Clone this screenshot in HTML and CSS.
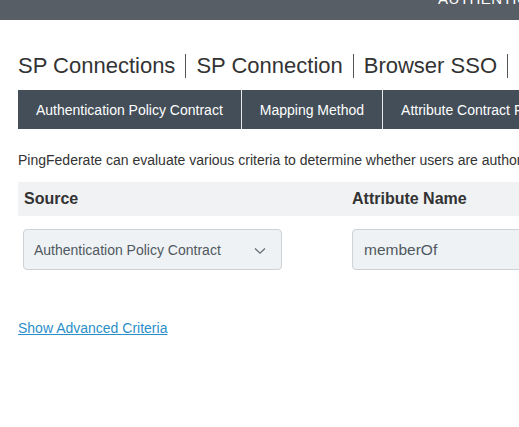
FILE: index.html
```html
<!DOCTYPE html>
<html>
<head>
<meta charset="utf-8">
<link rel="stylesheet" href="styles.css">
</head>
<body>
<div class="topbar"><span class="topbar-text">AUTHENTICATION</span></div>
<main class="content">
  <h1 class="crumbs">
    <span class="crumb">SP Connections</span>
    <span class="crumb">SP Connection</span>
    <span class="crumb">Browser SSO</span>
    <span class="crumb">Policy</span>
  </h1>
  <nav class="tabs">
    <div class="tab">Authentication Policy Contract</div>
    <div class="tab">Mapping Method</div>
    <div class="tab">Attribute Contract Fulfillment</div>
  </nav>
  <p class="intro">PingFederate can evaluate various criteria to determine whether users are authorized to access SP resources.</p>
  <div class="table">
    <div class="row head">
      <div class="cell">Source</div>
      <div class="cell">Attribute Name</div>
    </div>
    <div class="row">
      <div class="cell">
        <div class="select">
          <span>Authentication Policy Contract</span>
          <svg class="chev" width="12" height="8" viewBox="0 0 12 8"><path d="M1 1.5 L6 6.2 L11 1.5" fill="none" stroke="#666c72" stroke-width="1.3"/></svg>
        </div>
      </div>
      <div class="cell">
        <div class="input">memberOf</div>
      </div>
    </div>
  </div>
  <a class="adv" href="#">Show Advanced Criteria</a>
</main>
</body>
</html>
```
FILE: styles.css
```css
html, body {
  margin: 0;
  padding: 0;
  background: #fff;
  overflow: hidden;
  font-family: "Liberation Sans", Arial, sans-serif;
}
.topbar {
  height: 20px;
  background: #575e66;
  overflow: hidden;
  white-space: nowrap;
}
.topbar-text {
  display: block;
  padding-left: 438px;
  margin-top: -9px;
  color: #fff;
  font-size: 15px;
  line-height: 16px;
  letter-spacing: 0.5px;
}
.content {
  padding-left: 18px;
  white-space: nowrap;
}
.crumbs {
  margin: 34px 0 0 0;
  font-weight: normal;
  font-size: 22px;
  line-height: 24px;
  color: #333;
  display: flex;
}
.crumb {
  padding: 0 10px;
  border-left: 1px solid #555;
}
.crumb:first-child {
  padding-left: 0;
  border-left: none;
}
.tabs {
  margin-top: 12px;
  height: 39px;
  background: #434e58;
  display: flex;
}
.tab {
  color: #fff;
  font-size: 14px;
  line-height: 40px;
  padding: 0 18px;
  border-right: 1px solid #e8eaec;
}
.intro {
  margin: 22px 0 0 0;
  font-size: 14px;
  line-height: 18px;
  color: #333;
}
.table {
  margin-top: 13px;
}
.row {
  display: grid;
  grid-template-columns: 329px 1fr;
}
.row.head {
  background: #f1f2f4;
  height: 34px;
  align-items: center;
  font-weight: bold;
  font-size: 16px;
  color: #333;
  margin-bottom: 13px;
}
.cell {
  padding: 0 5px;
  min-width: 0;
}
.row.head .cell:first-child {
  padding-left: 6px;
}
.select, .input {
  border: 1px solid #cdd2d7;
  border-radius: 4px;
  background: #eef2f5;
  color: #505860;
  display: flex;
  align-items: center;
  box-sizing: border-box;
  height: 41px;
}
.select {
  width: 259px;
  padding-left: 10px;
  padding-right: 15px;
  justify-content: space-between;
  font-size: 14px;
}
.input {
  padding-left: 11px;
  width: 300px;
  font-size: 15.5px;
}
.chev {
  margin-top: 2px;
}
.adv {
  display: inline-block;
  margin-top: 50px;
  font-size: 14px;
  line-height: 16px;
  color: #2b8fc9;
  text-decoration: underline;
}
```
